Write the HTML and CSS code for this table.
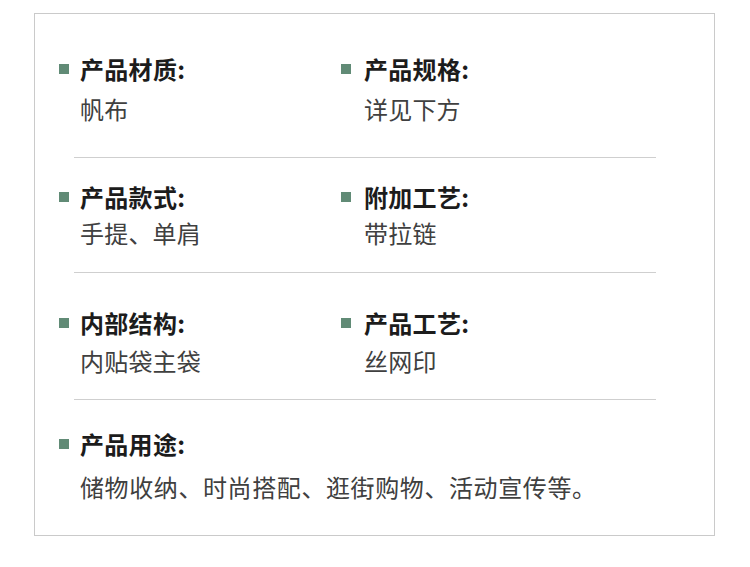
FILE: index.html
```html
<!DOCTYPE html>
<html lang="zh-CN">
<head>
<meta charset="utf-8">
<title>产品参数</title>
<link rel="stylesheet" href="styles.css">
</head>
<body>
<div class="card">
  <div class="row row1">
    <div class="item">
      <div class="title"><span class="dot"></span>产品材质:</div>
      <div class="value v1">帆布</div>
    </div>
    <div class="item right">
      <div class="title"><span class="dot"></span>产品规格:</div>
      <div class="value v1">详见下方</div>
    </div>
  </div>
  <div class="divider"></div>
  <div class="row row2">
    <div class="item">
      <div class="title"><span class="dot"></span>产品款式:</div>
      <div class="value">手提、单肩</div>
    </div>
    <div class="item right">
      <div class="title"><span class="dot"></span>附加工艺:</div>
      <div class="value">带拉链</div>
    </div>
  </div>
  <div class="divider"></div>
  <div class="row row3">
    <div class="item">
      <div class="title"><span class="dot"></span>内部结构:</div>
      <div class="value v3">内贴袋主袋</div>
    </div>
    <div class="item right">
      <div class="title"><span class="dot"></span>产品工艺:</div>
      <div class="value v3">丝网印</div>
    </div>
  </div>
  <div class="divider"></div>
  <div class="row row4">
    <div class="item wide">
      <div class="title"><span class="dot"></span>产品用途:</div>
      <div class="value v4">储物收纳、时尚搭配、逛街购物、活动宣传等。</div>
    </div>
  </div>
</div>
</body>
</html>
```
FILE: styles.css
```css
html, body {
  margin: 0;
  padding: 0;
  background: #ffffff;
}
body {
  font-family: "Noto Sans CJK SC", "Noto Sans", sans-serif;
  width: 750px;
  height: 567px;
  overflow: hidden;
}
.card {
  box-sizing: border-box;
  margin: 13px 0 0 34px;
  width: 681px;
  height: 523px;
  border: 1px solid #cacaca;
  padding-left: 24px;
}
.row {
  display: flex;
}
.item {
  width: 282px;
  display: flex;
  flex-direction: column;
}
.item.wide {
  width: 600px;
}
.title {
  display: flex;
  align-items: center;
  font-size: 24px;
  line-height: 36px;
  font-weight: 700;
  color: #1c1c1c;
  height: 36px;
  letter-spacing: 0.3px;
}
.dot {
  width: 10px;
  height: 10px;
  background: #618b76;
  margin-right: 11px;
  flex: none;
}
.right .dot {
  margin-right: 13px;
}
.value {
  padding-left: 21px;
  font-size: 24px;
  line-height: 36px;
  color: #404040;
  letter-spacing: 0.2px;
}
.right .value {
  padding-left: 23px;
}
.v1 { margin-top: 4px; }
.v3 { margin-top: 2px; }
.v4 { margin-top: 7px; letter-spacing: 0.6px; }
.row1 { padding: 37px 0 30px; }
.row2 { padding: 21px 0 21px; }
.row3 { padding: 32px 0 20px; }
.row4 { padding: 26px 0 0; }
.divider {
  margin-left: 15px;
  width: 582px;
  height: 1px;
  background: #cfcfcf;
}
```
